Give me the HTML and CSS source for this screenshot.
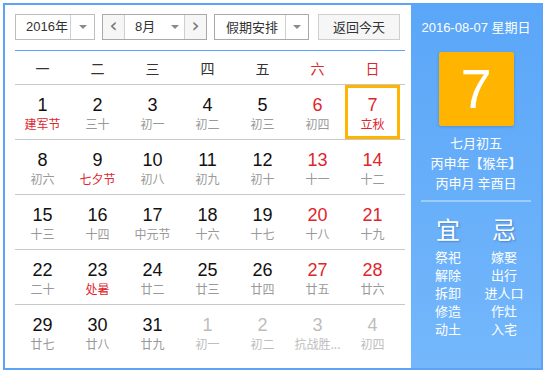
FILE: index.html
```html
<!DOCTYPE html>
<html lang="zh">
<head>
<meta charset="utf-8">
<link rel="stylesheet" href="styles.css">
</head>
<body>
<div class="cal">
  <div class="main">
    <div class="toolbar">
      <div class="sel sel-year"><span class="sel-text">2016年</span><span class="sel-arrow"><i class="tri"></i></span></div>
      <div class="month-group">
        <span class="nav-btn">&lsaquo;</span>
        <div class="sel-month"><span class="sel-text">8月</span><i class="tri"></i></div>
        <span class="nav-btn">&rsaquo;</span>
      </div>
      <div class="sel sel-holiday"><span class="sel-text">假期安排</span><span class="sel-arrow"><i class="tri"></i></span></div>
      <div class="today-btn">返回今天</div>
    </div>
    <div class="weekdays">
      <span>一</span><span>二</span><span>三</span><span>四</span><span>五</span><span class="red">六</span><span class="red">日</span>
    </div>
    <div class="week">
      <div class="day"><b>1</b><small class="red">建军节</small></div>
      <div class="day"><b>2</b><small>三十</small></div>
      <div class="day"><b>3</b><small>初一</small></div>
      <div class="day"><b>4</b><small>初二</small></div>
      <div class="day"><b>5</b><small>初三</small></div>
      <div class="day wkend"><b>6</b><small>初四</small></div>
      <div class="day wkend today"><b>7</b><small class="red">立秋</small></div>
    </div>
    <div class="week">
      <div class="day"><b>8</b><small>初六</small></div>
      <div class="day"><b>9</b><small class="red">七夕节</small></div>
      <div class="day"><b>10</b><small>初八</small></div>
      <div class="day"><b>11</b><small>初九</small></div>
      <div class="day"><b>12</b><small>初十</small></div>
      <div class="day wkend"><b>13</b><small>十一</small></div>
      <div class="day wkend"><b>14</b><small>十二</small></div>
    </div>
    <div class="week">
      <div class="day"><b>15</b><small>十三</small></div>
      <div class="day"><b>16</b><small>十四</small></div>
      <div class="day"><b>17</b><small>中元节</small></div>
      <div class="day"><b>18</b><small>十六</small></div>
      <div class="day"><b>19</b><small>十七</small></div>
      <div class="day wkend"><b>20</b><small>十八</small></div>
      <div class="day wkend"><b>21</b><small>十九</small></div>
    </div>
    <div class="week">
      <div class="day"><b>22</b><small>二十</small></div>
      <div class="day"><b>23</b><small class="red">处暑</small></div>
      <div class="day"><b>24</b><small>廿二</small></div>
      <div class="day"><b>25</b><small>廿三</small></div>
      <div class="day"><b>26</b><small>廿四</small></div>
      <div class="day wkend"><b>27</b><small>廿五</small></div>
      <div class="day wkend"><b>28</b><small>廿六</small></div>
    </div>
    <div class="week last">
      <div class="day"><b>29</b><small>廿七</small></div>
      <div class="day"><b>30</b><small>廿八</small></div>
      <div class="day"><b>31</b><small>廿九</small></div>
      <div class="day other"><b>1</b><small>初一</small></div>
      <div class="day other"><b>2</b><small>初二</small></div>
      <div class="day other"><b>3</b><small>抗战胜...</small></div>
      <div class="day other"><b>4</b><small>初四</small></div>
    </div>
  </div>
  <div class="side">
    <div class="side-date">2016-08-07 星期日</div>
    <div class="big-day">7</div>
    <div class="lunar">
      <div>七月初五</div>
      <div>丙申年【猴年】</div>
      <div>丙申月 辛酉日</div>
    </div>
    <div class="sep"></div>
    <div class="yiji">
      <div class="col">
        <div class="head">宜</div>
        <div>祭祀</div><div>解除</div><div>拆卸</div><div>修造</div><div>动土</div>
      </div>
      <div class="col">
        <div class="head">忌</div>
        <div>嫁娶</div><div>出行</div><div>进人口</div><div>作灶</div><div>入宅</div>
      </div>
    </div>
  </div>
</div>
</body>
</html>
```
FILE: styles.css
```css
* { box-sizing: border-box; }
html, body { margin: 0; padding: 0; background: #fff; }
body {
  padding: 3px 0 0 3px;
  font-family: "Liberation Sans", "Noto Sans CJK SC", sans-serif;
  color: #333;
}
.cal {
  display: flex;
  width: 540px;
  height: 367px;
  border: 2px solid #5ba4f7;
}
.main {
  width: 406px;
  padding: 9px 6px 0 10px;
}
.toolbar {
  display: flex;
  align-items: center;
  height: 26px;
  font-size: 13px;
  font-family: "Noto Sans CJK SC", sans-serif;
}
.sel {
  display: flex;
  height: 26px;
  border: 1px solid #bdbdbd;
  background: #fff;
}
.sel-year { width: 80px; }
.sel-year .sel-text { width: 54px; padding-left: 10px; font-family: "Liberation Sans", "Noto Sans CJK SC", sans-serif; }
.sel-holiday { width: 95px; margin-left: 7px; border-color: #a9a9a9; }
.sel-holiday .sel-text { width: 70px; padding-left: 11px; }
.sel-text { line-height: 24px; color: #333; }
.sel-arrow {
  flex: 1;
  display: flex;
  align-items: center;
  justify-content: center;
  border-left: 1px solid #cfcfcf;
}
.tri {
  display: block;
  width: 0; height: 0;
  border-left: 4px solid transparent;
  border-right: 4px solid transparent;
  border-top: 4px solid #8a8a8a;
}
.month-group {
  display: flex;
  width: 105px;
  height: 26px;
  margin-left: 7px;
  border: 1px solid #a9a9a9;
}
.nav-btn {
  width: 22px;
  background: #f6f6f6;
  color: #777;
  font-size: 20px;
  line-height: 21px;
  text-align: center;
  font-family: "DejaVu Sans", sans-serif;
}
.month-group .nav-btn:first-child { border-right: 1px solid #cfcfcf; }
.month-group .nav-btn:last-child { border-left: 1px solid #cfcfcf; }
.sel-month {
  flex: 1;
  display: flex;
  align-items: center;
  padding-left: 10px;
  gap: 16px;
}
.sel-month .sel-text { font-family: "Liberation Sans", "Noto Sans CJK SC", sans-serif; }
.today-btn {
  width: 82px;
  height: 26px;
  margin-left: 9px;
  border: 1px solid #cfcfcf;
  background: #f6f6f6;
  text-align: center;
  line-height: 24px;
  color: #333;
  font-size: 13px;
}
.weekdays {
  display: grid;
  grid-template-columns: repeat(7, 55px);
  margin-top: 10px;
  border-top: 1px solid #5ba4f7;
  border-bottom: 1px solid #c8c8c8;
  height: 35px;
  align-items: center;
  font-family: "Noto Sans CJK SC", sans-serif;
  font-size: 14px;
}
.weekdays span { text-align: center; color: #333; }
.weekdays span.red { color: #e0262b; }
.week {
  display: grid;
  grid-template-columns: repeat(7, 55px);
  height: 55px;
  border-bottom: 1px solid #c8c8c8;
}
.week.last { border-bottom: none; }
.day {
  display: flex;
  flex-direction: column;
  align-items: center;
  padding-top: 10px;
}
.day b {
  font-weight: normal;
  font-size: 18px;
  line-height: 20px;
  color: #111;
}
.day small {
  font-family: "Noto Sans CJK SC", sans-serif;
  font-size: 12px;
  line-height: 18px;
  color: #999;
  white-space: nowrap;
}
.day small.red { color: #e0262b; }
.day.wkend b { color: #e0262b; }
.day.other b { color: #bdbdbd; }
.day.other small { color: #bdbdbd; }
.day.today { box-shadow: inset 0 0 0 3px #ffb400; }
.side {
  width: 130px;
  background: linear-gradient(#5aa6f8, #74b7fb);
  color: #fff;
  display: flex;
  flex-direction: column;
  align-items: center;
  padding-top: 13px;
  font-family: "Noto Sans CJK SC", sans-serif;
}
.side-date {
  font-family: "Liberation Sans", "Noto Sans CJK SC", sans-serif;
  font-size: 13px;
  line-height: 20px;
  white-space: nowrap;
}
.big-day {
  margin-top: 14px;
  width: 75px;
  height: 74px;
  background: #ffb400;
  border-radius: 2px;
  box-shadow: 0 1px 3px rgba(40, 90, 160, 0.35);
  font-family: "Liberation Sans", sans-serif;
  font-size: 56px;
  line-height: 74px;
  text-align: center;
}
.lunar {
  margin-top: 7px;
  font-size: 13px;
  line-height: 20px;
  text-align: center;
  white-space: nowrap;
}
.sep {
  margin-top: 7px;
  width: 110px;
  height: 2px;
  background: rgba(255, 255, 255, 0.35);
}
.yiji {
  display: flex;
  width: 112px;
  margin-top: 12px;
}
.col {
  width: 56px;
  text-align: center;
  font-size: 13px;
  line-height: 18px;
  white-space: nowrap;
}
.col .head {
  font-size: 24px;
  line-height: 30px;
  margin-bottom: 4px;
  text-shadow: 1px 1px 2px rgba(30, 70, 140, 0.45);
}
```
